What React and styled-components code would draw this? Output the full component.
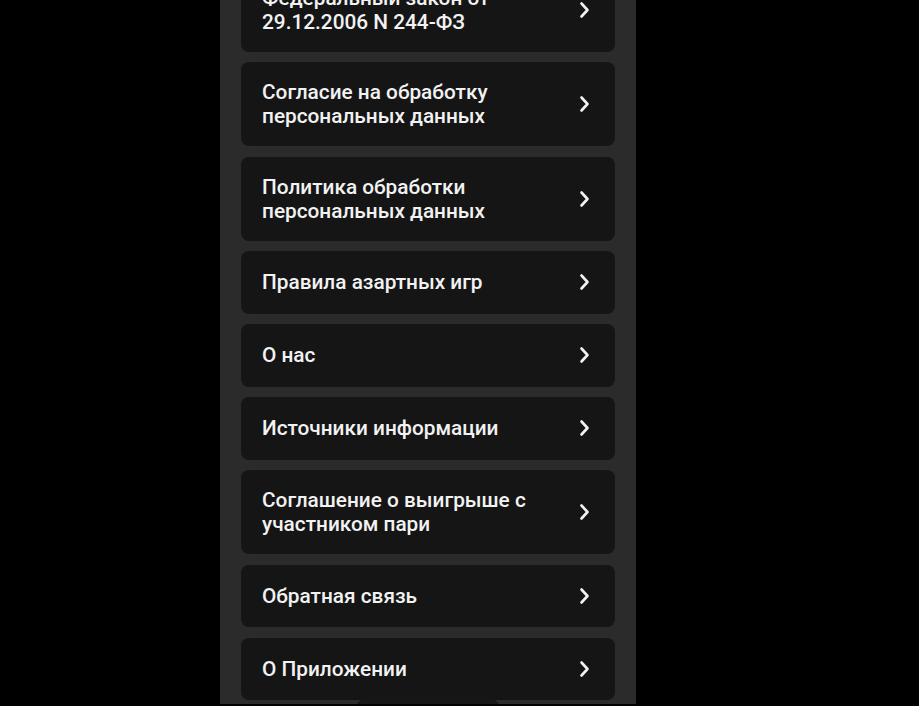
import React from 'react';
import styled, { createGlobalStyle } from 'styled-components';

const GlobalStyle = createGlobalStyle`
  html, body {
    margin: 0;
    padding: 0;
    background: #000;
    overflow: hidden;
  }
  body {
    font-family: Roboto, "Noto Sans", sans-serif;
  }
`;

const Screen = styled.div`
  position: relative;
  width: 919px;
  height: 706px;
  background: #000;
  display: flex;
  overflow: hidden;
`;

const Panel = styled.div`
  position: relative;
  width: 416px;
  height: 704px;
  margin-left: 220px;
  background: #2b2b2b;
  overflow: hidden;
`;

// list is scrolled: the first card sits partly above the top edge
const List = styled.div`
  display: flex;
  flex-direction: column;
  gap: 10.5px;
  padding: 0 21px;
  margin-top: -32.5px;
`;

const Item = styled.div`
  display: flex;
  align-items: center;
  justify-content: space-between;
  min-height: 62.6px;
  box-sizing: border-box;
  padding: 18px 24px 18px 21px;
  background: #151515;
  border-radius: 8px;
`;

const Label = styled.span`
  color: #f2f2f2;
  font-size: 20.8px;
  font-weight: 500;
  line-height: 24px;
  max-width: 290px;
`;

const TabPeek = styled.div`
  position: absolute;
  left: 135px;
  bottom: -2px;
  width: 146px;
  height: 9px;
  background: #161616;
  clip-path: polygon(0 100%, 6% 0, 94% 0, 100% 100%);
`;

const Chevron = () => (
  <svg width="12" height="18" viewBox="0 0 12 18" fill="none">
    <path d="M2.5 2.5 L8.5 9 L2.5 15.5" stroke="#f2f2f2" strokeWidth="2.6" strokeLinecap="round" strokeLinejoin="round" />
  </svg>
);

const items = [
  'Федеральный закон от 29.12.2006 N 244-ФЗ',
  'Согласие на обработку персональных данных',
  'Политика обработки персональных данных',
  'Правила азартных игр',
  'О нас',
  'Источники информации',
  'Соглашение о выигрыше с участником пари',
  'Обратная связь',
  'О Приложении',
];

export default function App() {
  return (
    <Screen>
      <GlobalStyle />
      <Panel>
        <List>
          {items.map((t) => (
            <Item key={t}>
              <Label>{t}</Label>
              <Chevron />
            </Item>
          ))}
        </List>
        <TabPeek />
      </Panel>
    </Screen>
  );
}
